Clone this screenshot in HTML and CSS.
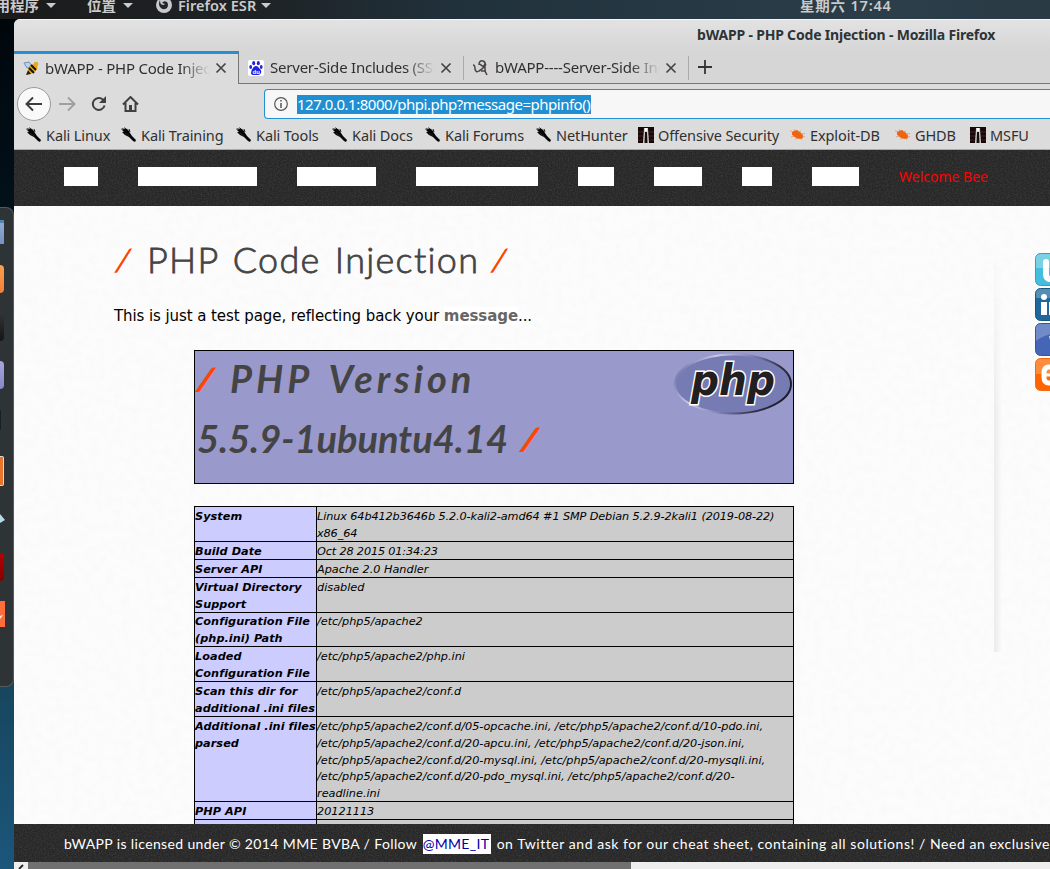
FILE: index.html
```html
<!DOCTYPE html>
<html lang="zh">
<head>
<meta charset="utf-8">
<title>bWAPP - PHP Code Injection</title>
<link rel="stylesheet" href="styles.css">
</head>
<body>
<svg class="defs" width="0" height="0" aria-hidden="true">
  <defs>
    <filter id="grain" x="0" y="0" width="100%" height="100%">
      <feTurbulence type="fractalNoise" baseFrequency="0.7" numOctaves="2" seed="4"/>
      <feColorMatrix values="0 0 0 0 1  0 0 0 0 1  0 0 0 0 1  0.18 0 0 0 -0.065"/>
    </filter>
    <filter id="paper" x="0" y="0" width="100%" height="100%">
      <feTurbulence type="fractalNoise" baseFrequency="0.12" numOctaves="3" seed="8"/>
      <feColorMatrix values="0 0 0 0 0.8  0 0 0 0 0.8  0 0 0 0 0.8  0.25 0 0 0 -0.09"/>
    </filter>
    <symbol id="kali" viewBox="0 0 16 16"><path d="M0 1l4 1-1-2 4 3-1-2 3 5 2 3 4 4-1 2-2-1-4-4-4-2-3-3 2 0-3-3 3 1z" fill="#050505"/><path d="M4 6l4 3M8 2l1 3" stroke="#222"/></symbol>
    <symbol id="offsec" viewBox="0 0 16 16"><path d="M0 0h16v16H0z" fill="#160708"/><path d="M0 5h5M0 9h5M11 5h5M11 9h5M0 13h4M12 13h4" stroke="#4c2424"/><path d="M6 1h4l1 15H5z" fill="#d8d2ca"/><path d="M7 5h2l.5 11h-3z" fill="#111"/><path d="M7 1h2v3H7z" fill="#fff"/></symbol>
    <symbol id="edb" viewBox="0 0 16 16"><path d="M2 5l3-1.500 2-.5 3 2 3 3 0 3-2 1-4-.5-3-2-2-2z" fill="#ee6411"/><path d="M3 5L0 3.500M5 4L4 2M8 5l3-1M11 7l4-.5M12 9l3 1M4 9l-3 1M7 11l-2 1.500M11 11l1 2" stroke="#ee9460" stroke-width=".8" fill="none"/></symbol>
    <symbol id="close" viewBox="0 0 12 12"><path d="M1.500 1.500l9 9m0-9l-9 9" stroke="#444" stroke-width="1.7"/></symbol>
  </defs>
</svg>
<div class="desktop">
  <header class="panel">
    <span class="panel-apps">用程序</span><i class="caret"></i>
    <span class="panel-places">位置</span><i class="caret"></i>
    <svg class="panel-fox" width="16" height="16" viewBox="0 0 16 16"><circle cx="8" cy="8" r="8" fill="#c9c9c9"/><path d="M4 3q0 3 1 4 2 2 4 0l-3-1q2-3 5-1 2 3 0 6-4 3-7-1-2-3 0-7z" fill="#222729"/></svg>
    <span class="panel-app">Firefox ESR</span><i class="caret"></i>
    <span class="panel-clock">星期六 17:44</span>
  </header>
  <div class="workspace">
    <aside class="dock">
      <i class="files"></i><i class="orange"></i><i class="black"></i><i class="violet"></i><i class="thin"></i><i class="burp"></i>
      <svg class="wing" width="5" height="14"><path d="M0 2l5 6-5 3z" fill="#b9dbe9"/></svg>
      <i class="red"></i>
      <svg class="tip" width="5" height="26"><path d="M0 0h5v26H0z" fill="#ff6d3b"/><path d="M0 15l3-1-3 4z" fill="#fff"/></svg>
    </aside>
    <main class="window">
      <div class="titlebar"><span>bWAPP - PHP Code Injection - Mozilla Firefox</span></div>
      <div class="tabs">
        <div class="tab active">
          <svg width="16" height="16" viewBox="0 0 16 16"><path d="M1 3l5-1 3 4-5 2z" fill="#b7d4f3" stroke="#6d8fbb"/><path d="M5 9q1-4 6-5 5 1 3 5-3 5-8 5z" fill="#e9a412"/><path d="M8 5l5 5M6 8l5 5" stroke="#171410" stroke-width="2"/><circle cx="13" cy="4" r="2.3" fill="#e4aa25"/><path d="M5 10l-2 5 5-1" fill="#302010"/></svg>
          <span class="tab-text">bWAPP - PHP Code Injection</span><svg class="x" width="12" height="12"><use href="#close"/></svg>
        </div>
        <div class="tab">
          <svg width="16" height="16" viewBox="0 0 16 16"><rect width="16" height="16" rx="2" fill="#fff"/><g fill="#2422df"><ellipse cx="5.7" cy="3.2" rx="1.5" ry="2.1"/><ellipse cx="10.3" cy="3.2" rx="1.5" ry="2.1"/><ellipse cx="2.7" cy="7" rx="1.4" ry="1.9"/><ellipse cx="13.2" cy="7" rx="1.4" ry="1.9"/><path d="M8 6q2 0 3 2 3 2 2 5-1 2-3 2H6q-3 0-3-2 0-3 2-5 1-2 3-2z"/></g><text x="4.500" y="13.500" class="du">du</text></svg>
          <span class="tab-text">Server-Side Includes (SSI)</span><svg class="x" width="12" height="12"><use href="#close"/></svg>
        </div>
        <div class="tab">
          <svg width="16" height="16" viewBox="0 0 16 16"><path d="M0 5q2 0 2 4 1 4 4 2 4-2 7-7M6 5q0-5 4-4 3 1 2 5l0 5 2 4M7 4q3 4 5 0M8 11l5 0" fill="none" stroke="#4a4542" stroke-width="1.500"/></svg>
          <span class="tab-text">bWAPP----Server-Side Includes</span><svg class="x" width="12" height="12"><use href="#close"/></svg>
        </div>
        <svg class="newtab" width="14" height="14"><path d="M7 0v14M0 7h14" stroke="#333" stroke-width="1.8"/></svg>
      </div>
      <div class="toolbar">
        <span class="back"><svg width="18" height="16" viewBox="0 0 18 16"><path d="M17 8H2M8 1.500L1.500 8 8 14.500" fill="none" stroke="#3c3c3c" stroke-width="1.9"/></svg></span>
        <svg class="fwd" width="17" height="16" viewBox="0 0 17 16"><path d="M0 8h15M9 1.500L15.500 8 9 14.500" fill="none" stroke="#a0a0a0" stroke-width="1.9"/></svg>
        <svg class="reload" width="16" height="16" viewBox="0 0 16 16"><path d="M13.600 9.500A6 6 0 1 1 12 3.600l2 2" fill="none" stroke="#404040" stroke-width="2"/><path d="M15 0v7H8z" fill="#404040"/></svg>
        <svg class="home" width="17" height="16" viewBox="0 0 17 16"><path d="M1 8.500L8.500 1 16 8.500M3.500 7v8h10V7" fill="none" stroke="#404040" stroke-width="2"/><path d="M7 9h3v6H7z" fill="#404040"/></svg>
        <div class="urlbar">
          <svg width="14" height="14" viewBox="0 0 14 14"><circle cx="7" cy="7" r="6.300" fill="none" stroke="#555" stroke-width="1.2"/><path d="M7 6v5M7 3v1.600" stroke="#555" stroke-width="1.500"/></svg>
          <span class="url">127.0.0.1:8000/phpi.php?message=phpinfo()</span>
        </div>
      </div>
      <nav class="bookmarks">
        <a><svg><use href="#kali"/></svg>Kali Linux</a><a><svg><use href="#kali"/></svg>Kali Training</a><a><svg><use href="#kali"/></svg>Kali Tools</a><a><svg><use href="#kali"/></svg>Kali Docs</a><a><svg><use href="#kali"/></svg>Kali Forums</a><a><svg><use href="#kali"/></svg>NetHunter</a><a><svg><use href="#offsec"/></svg>Offensive Security</a><a><svg><use href="#edb"/></svg>Exploit-DB</a><a><svg><use href="#edb"/></svg>GHDB</a><a><svg><use href="#offsec"/></svg>MSFU</a>
      </nav>
      <section class="page">
        <div class="menu"><svg class="texture"><rect width="100%" height="100%" filter="url(#grain)"/></svg>
          <div class="menu-items"><i></i><i></i><i></i><i></i><i></i><i></i><i></i><i></i><span>Welcome Bee</span></div>
        </div>
        <div class="content"><svg class="texture"><rect width="100%" height="100%" filter="url(#paper)"/></svg>
          <div class="article">
            <h1><span class="slash">/</span><span class="h1-text">PHP Code Injection</span><span class="slash">/</span></h1>
            <p>This is just a test page, reflecting back your <b>message</b>...</p>
            <div class="version">
              <h2><span class="line"><span class="slash">/</span><span class="v1">PHP Version</span></span><span class="line"><span class="v2">5.5.9-1ubuntu4.14</span><span class="slash">/</span></span></h2>
              <svg class="php" width="120" height="64" viewBox="0 0 120 64"><defs><linearGradient id="rim" x1="0" y1=".3" x2="1" y2=".6"><stop offset="0" stop-color="#7377ad"/><stop offset=".25" stop-color="#c9c9e4"/><stop offset=".55" stop-color="#7a7db4"/><stop offset=".8" stop-color="#333347"/><stop offset="1" stop-color="#191927"/></linearGradient></defs><ellipse cx="60" cy="32" rx="58" ry="29.500" fill="#777bb3" stroke="url(#rim)" stroke-width="2"/><text x="18" y="43" textLength="84" lengthAdjust="spacingAndGlyphs" class="php-text">php</text></svg>
            </div>
            <table>
              <tbody>
              <tr class="r35"><th>System</th><td class="sys">Linux 64b412b3646b 5.2.0-kali2-amd64 #1 SMP Debian 5.2.9-2kali1 (2019-08-22)<br>x86_64</td></tr>
              <tr class="r18"><th>Build Date</th><td class="date">Oct 28 2015 01:34:23</td></tr>
              <tr class="r18"><th>Server API</th><td>Apache 2.0 Handler</td></tr>
              <tr class="r35"><th>Virtual Directory<br>Support</th><td>disabled</td></tr>
              <tr class="r34"><th>Configuration File<br>(php.ini) Path</th><td>/etc/php5/apache2</td></tr>
              <tr class="r35"><th>Loaded<br>Configuration File</th><td>/etc/php5/apache2/php.ini</td></tr>
              <tr class="r35"><th>Scan this dir for<br>additional .ini files</th><td>/etc/php5/apache2/conf.d</td></tr>
              <tr class="r85"><th>Additional .ini files<br>parsed</th><td>/etc/php5/apache2/conf.d/05-opcache.ini, /etc/php5/apache2/conf.d/10-pdo.ini,<br>/etc/php5/apache2/conf.d/20-apcu.ini, /etc/php5/apache2/conf.d/20-json.ini,<br>/etc/php5/apache2/conf.d/20-mysql.ini, /etc/php5/apache2/conf.d/20-mysqli.ini,<br>/etc/php5/apache2/conf.d/20-pdo_mysql.ini, /etc/php5/apache2/conf.d/20-<br>readline.ini</td></tr>
              <tr class="r18"><th>PHP API</th><td>20121113</td></tr>
              <tr class="r18"><th></th><td></td></tr>
              </tbody>
            </table>
          </div>
          <div class="fold"></div>
          <div class="social">
            <svg><rect x=".5" y=".5" width="32" height="32" rx="5" fill="#43bfdd" stroke="#24a5cb"/><path d="M1 5q0-4 5-4h12v14H1z" fill="#a2dcec" opacity=".6"/><path d="M11 9v12q0 6 7 5" fill="none" stroke="#fff" stroke-width="6" stroke-linecap="round"/></svg>
            <svg><rect x=".5" y=".5" width="32" height="32" rx="5" fill="#20689b" stroke="#17577f"/><path d="M1 5q0-4 5-4h12v9H1z" fill="#78a8bf" opacity=".6"/><circle cx="9" cy="9" r="3" fill="#fff"/><path d="M6 14h6v13H6zM14 14h6v13h-6z" fill="#fff"/></svg>
            <svg><rect x=".5" y=".5" width="32" height="32" rx="5" fill="#4565b6" stroke="#3454a0"/><path d="M1 5q0-4 5-4h12v10Q8 12 1 18z" fill="#8fa4d3" opacity=".6"/><path d="M14 13h6v4h-5z" fill="#e6eaf5"/></svg>
            <svg><rect x=".5" y=".5" width="32" height="32" rx="5" fill="#ff6600" stroke="#f26a16"/><path d="M1 5q0-4 5-4h12v15H1z" fill="#ff9c55" opacity=".7"/><path d="M20 9h-6q-5 0-5 6v4q0 6 5 6h6" fill="none" stroke="#fff" stroke-width="5"/><path d="M10 17h8" stroke="#fff" stroke-width="3"/></svg>
          </div>
        </div>
        <footer><svg class="texture"><rect width="100%" height="100%" filter="url(#grain)"/></svg>
          <div class="foot-text"><span class="f1">bWAPP is licensed under © 2014 MME BVBA / Follow</span><a>@MME_IT</a><span class="f2">on Twitter and ask for our cheat sheet, containing all solutions! / Need an exclusive</span></div>
        </footer>
      </section>
      <div class="scroll"><span class="arrow"><svg width="14" height="7"><path d="M9 3L5 7" stroke="#222" stroke-width="1.8"/></svg></span><span class="thumb"></span></div>
    </main>
  </div>
</div>
</body>
</html>
```
FILE: styles.css
```css
* { box-sizing: border-box; }
body { margin: 0; width: 1050px; height: 869px; overflow: hidden; font-family: "Noto Sans", "Noto Sans CJK SC", sans-serif; }
svg { display: block; flex: none; }
.defs { position: absolute; }
.desktop { width: 1050px; height: 869px; display: flex; flex-direction: column; background: linear-gradient(#00060a 0, #02101a 200px, #17465f 690px, #1b567b 869px); }
.panel { height: 19px; flex: none; display: flex; align-items: flex-start; overflow: hidden; background: linear-gradient(90deg, #1b1b1b 0, #1e2326 25%, #21323d 45%, #2b3e49 85%, #2a3a45 100%); color: #cbcbcb; font-weight: 600; font-size: 14.5px; line-height: 20px; white-space: nowrap; }
.panel span { margin-top: -5px; height: 20px; }
.panel-apps { width: 46px; display: flex; justify-content: flex-end; padding-right: 7px; }
.caret { border: 5px solid transparent; border-top-color: #cbcbcb; border-bottom: 0; margin-top: 3px; }
.panel-places { width: 67px; padding-left: 31px; }
.panel-fox { margin: -3px 6px 0 23px; }
.panel-app { width: 83px; letter-spacing: .05px; }
.panel-clock { margin-left: 529px; letter-spacing: .8px; }
.workspace { flex: 1; min-height: 0; display: flex; }
.dock { width: 14px; height: 480px; margin-top: 188px; padding-top: 12px; display: flex; flex-direction: column; background: #2e3436; border: 1px solid #555a5b; border-left: 0; border-radius: 0 8px 8px 0; }
.dock i { display: block; flex: none; width: 4px; height: 28px; border-radius: 0 5px 5px 0; margin-bottom: 20px; }
.dock .files { height: 24px; background: linear-gradient(#5185ae 0 3px, #8eacd6 3px, #7890c0); border-radius: 0; margin-bottom: 21px; }
.dock .orange { background: linear-gradient(#f9a050, #f57f35); }
.dock .black { background: linear-gradient(#333, #151515); }
.dock .violet { background: linear-gradient(#aaa6dc, #8986cb); }
.dock .thin { width: 1px; background: #13212d; height: 20px; margin: 1px 0 26px; }
.dock .burp { height: 30px; background: #e9752a; border: 1px solid #ddd; border-left: 0; border-radius: 0 2px 2px 0; margin-bottom: 26px; }
.dock .wing { margin-bottom: 27px; }
.dock .red { background: linear-gradient(#b80000, #850000); }
.window { flex: 1; min-width: 0; display: flex; flex-direction: column; background: #d8d8d8; border-top-left-radius: 6px; overflow: hidden; color: #303030; }
.titlebar { height: 32px; flex: none; background: linear-gradient(#f6f6f6 0 1px, #e2e2e2 1px, #d6d6d6); padding-left: 683px; font-size: 14px; line-height: 32px; font-weight: 700; color: #2e3436; white-space: nowrap; letter-spacing: -.19px; }
.tabs { height: 33px; flex: none; display: flex; background: linear-gradient(#777, #777) 0 100%/100% 1px no-repeat #d6d6d6; font-size: 15px; }
.tab { width: 225px; height: 32px; display: flex; align-items: center; padding: 2px 0 0 9px; }
.tab:nth-child(2)::after, .tab:nth-child(3)::after { content: ""; width: 1px; height: 24px; background: #aaa; margin-left: 11px; }
.tab.active { height: 33px; border-top: 3px solid #248fd1; border-right: 1px solid #777; background: #dcdcdc; padding-top: 0; }
.tab-text { width: 165px; margin: -2px 0 0 6px; white-space: nowrap; overflow: hidden; letter-spacing: -.22px; -webkit-mask-image: linear-gradient(90deg, #000 82%, transparent); mask-image: linear-gradient(90deg, #000 82%, transparent); }
.tab .x { margin-left: 5px; }
.tab.active .x, .tab.active > svg:first-child { margin-top: -2px; }
.du { font: bold 6px "Liberation Sans", sans-serif; fill: #fff; }
.newtab { margin: 9px 0 0 9px; }
.toolbar { height: 37px; flex: none; display: flex; align-items: center; background: #dcdcdc; padding: 3px 0 0 3px; }
.back { width: 34px; height: 34px; flex: none; border: 1px solid #999; border-radius: 50%; background: #f9f9f9; display: flex; align-items: center; justify-content: center; }
.fwd { margin-left: 8px; }
.reload { margin-left: 15px; }
.home { margin-left: 15px; }
.urlbar { margin-left: 125px; flex: 1; height: 30px; border: 1px solid #248fd1; border-right: 0; border-radius: 4px 0 0 4px; background: #f7f7f7; display: flex; align-items: center; padding-left: 9px; }
.url { margin-left: 9px; width: 294px; height: 19px; line-height: 19px; color: #fff; background: #1f8fd2; font-size: 15px; white-space: nowrap; letter-spacing: -.48px; }
.bookmarks { height: 29px; flex: none; background: #dcdcdc; border-bottom: 1px solid #aaa; padding-left: 12px; display: grid; grid-template-columns: 83px 103px 84px 81px 99px 90px 140px 93px 63px 61px; column-gap: 12px; align-items: center; font-size: 14.5px; letter-spacing: -.1px; white-space: nowrap; }
.bookmarks a { display: flex; align-items: center; height: 20px; }
.bookmarks svg { width: 16px; height: 16px; margin-right: 4px; }
.page { flex: 1; min-height: 0; display: flex; flex-direction: column; color: #000; font-family: "DejaVu Sans", sans-serif; }
.texture { position: absolute; inset: 0; width: 100%; height: 100%; }
.menu { height: 56px; flex: none; position: relative; background: #272727; }
.menu-items { position: relative; display: grid; grid-template-columns: 34px 119px 79px 122px 36px 48px 30px 47px 110px; column-gap: 40px; padding: 17px 0 0 50px; }
.menu-items i { height: 19px; background: #fff; }
.menu-items span { color: #f00; font: 14px/20px "Noto Sans", sans-serif; white-space: nowrap; }
.content { flex: 1; min-height: 0; position: relative; overflow: hidden; background: #fcfcfc; display: flex; }
.article { position: relative; width: 700px; padding: 28px 20px 0 100px; flex: none; }
h1, h2 { margin: 0; font-family: Lato, "Open Sans", sans-serif; color: #444; font-weight: 300; white-space: nowrap; }
h1 { height: 60px; width: 420px; line-height: 50px; font-size: 36px; display: flex; -webkit-text-stroke: .8px currentColor; }
.slash { color: #ff4500; display: inline-block; transform: skewX(-12deg); font-size: 30px; -webkit-text-stroke: 1.2px currentColor; }
h1 .slash { width: 33px; padding-left: 2px; }
.h1-text { width: 343px; letter-spacing: 1.3px; word-spacing: 3px; }
p { margin: 12px 0 0; height: 20px; line-height: 20px; font-size: 15px; white-space: nowrap; letter-spacing: -.08px; }
p b { color: #666; background: #fff; }
.version { width: 600px; height: 134px; margin: 24px 0 22px 80px; border: 1px solid #000; background: #9999cc; display: flex; justify-content: space-between; }
h2 { font-weight: 700; font-style: italic; font-size: 38px; }
.line { display: flex; height: 60px; line-height: 54px; }
h2 .slash { width: 35px; padding-left: 4px; }
.v1 { letter-spacing: 4px; word-spacing: 5px; }
.v2 { width: 324px; padding-left: 2px; }
.php { margin-top: 1px; }
.php-text { font: bold italic 42px "DejaVu Sans", sans-serif; fill: #231f20; stroke: #fff; stroke-width: 3px; paint-order: stroke; }
table { display: block; margin-left: 80px; width: 600px; border: 1px solid #000; border-bottom: 0; font-size: 11.25px; font-style: italic; line-height: 16.8px; }
tbody { display: block; }
tr { display: grid; grid-template-columns: 122px 476px; grid-template-rows: 100%; border-bottom: 1px solid #000; }
th, td { padding: 2px 0 0; text-align: left; white-space: nowrap; min-height: 0; }
th { border-right: 1px solid #000; background: #ccccff; font-weight: 700; letter-spacing: .06px; }
td { background: #ccc; }
.sys { letter-spacing: -.1px; }
.date { letter-spacing: -.15px; }
.r18 { height: 18px; } .r34 { height: 34px; } .r35 { height: 35px; } .r85 { height: 85px; }
.r18 th, .r18 td { line-height: 15px; }
.r34 th, .r34 td { padding-top: 1px; }
.fold { position: relative; margin: 44px 0 0 280px; width: 8px; height: 402px; flex: none; background: linear-gradient(90deg, #ebebeb, #fbfbfb); -webkit-mask-image: linear-gradient(transparent, #000 40%); mask-image: linear-gradient(transparent, #000 40%); }
.social { position: relative; margin: 47px 0 0 33px; display: flex; flex-direction: column; gap: 2px; flex: none; }
.social svg { width: 33px; height: 33px; }
footer { height: 38px; flex: none; position: relative; background: #272727; }
.foot-text { position: relative; display: flex; padding: 10px 0 0 50px; font: 14px/20px Lato, sans-serif; color: #fff; white-space: nowrap; }
.f1 { width: 359px; letter-spacing: .37px; }
.foot-text a { width: 68px; height: 20px; background: #fff; color: #00a; letter-spacing: .3px; }
.f2 { margin-left: 6px; letter-spacing: .55px; }
.scroll { height: 7px; flex: none; display: flex; background: #eee; }
.arrow { width: 14px; background: #eee; }
.thumb { width: 603px; background: #707070; }
```
